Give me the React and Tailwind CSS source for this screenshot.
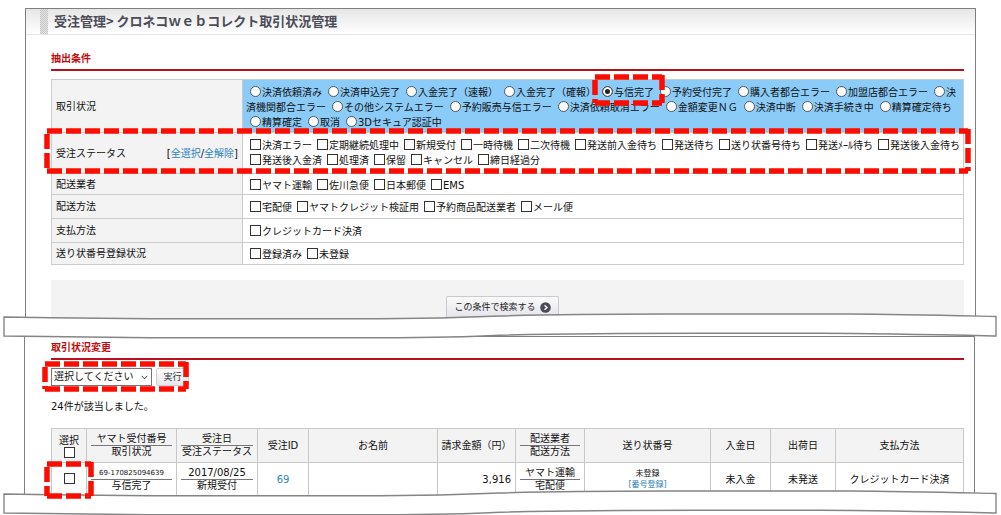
import React from "react";

const tradeStates = [
  "決済依頼済み", "決済申込完了", "入金完了（速報）", "入金完了（確報）", "与信完了",
  "予約受付完了", "購入者都合エラー", "加盟店都合エラー", "決済機関都合エラー",
  "その他システムエラー", "予約販売与信エラー", "決済依頼取消エラー", "金額変更ＮＧ",
  "決済中断", "決済手続き中", "精算確定待ち", "精算確定", "取消", "3Dセキュア認証中",
];

const orderStates = [
  "決済エラー", "定期継続処理中", "新規受付", "一時待機", "二次待機", "発送前入金待ち",
  "発送待ち", "送り状番号待ち", "発送ﾒｰﾙ待ち", "発送後入金待ち", "発送後入金済", "処理済",
  "保留", "キャンセル", "締日経過分",
];

const otherRows = [
  { title: "配送業者", height: "h-[21px]", items: ["ヤマト運輸", "佐川急便", "日本郵便", "EMS"] },
  { title: "配送方法", height: "h-6", items: ["宅配便", "ヤマトクレジット検証用", "予約商品配送業者", "メール便"] },
  { title: "支払方法", height: "h-6", items: ["クレジットカード決済"] },
  { title: "送り状番号登録状況", height: "h-[22px]", items: ["登録済み", "未登録"] },
];

const boxClass =
  "inline-block size-[11px] appearance-none border border-[#333] bg-white align-[-1px] checked:bg-[#333]";

function Marker({ className }) {
  return (
    <svg className={`pointer-events-none absolute z-20 overflow-visible ${className}`} aria-hidden="true">
      <g stroke="#fb0d00" strokeWidth="5.5" strokeDasharray="15 4">
        <line x1="0" y1="0" x2="100%" y2="0" />
        <line x1="0" y1="100%" x2="100%" y2="100%" />
        <line x1="0" y1="3" x2="0" y2="100%" />
        <line x1="100%" y1="-2" x2="100%" y2="100%" />
      </g>
    </svg>
  );
}

function Radio({ text }) {
  const on = text === "与信完了";
  return (
    <label className={on ? "relative mr-[2px]" : "mr-[2px]"}>
      <input
        type="radio"
        name="trade"
        defaultChecked={on}
        className="mr-px ml-1 inline-block size-[11px] appearance-none rounded-full border border-[#555] bg-white align-[-1px] checked:bg-[#222] checked:shadow-[inset_0_0_0_2px_white]"
      />
      {text}
      {on && <Marker className="-top-[10px] -left-[3px] h-[26px] w-[67px]" />}
    </label>
  );
}

function Check({ text }) {
  return (
    <label className="mr-px">
      <input type="checkbox" className={`mr-px ml-1 ${boxClass}`} />
      {text}
    </label>
  );
}

function Tear({ className }) {
  return (
    <svg
      className={`pointer-events-none relative z-10 block h-[26px] w-full ${className}`}
      viewBox="0 0 1001 26"
      preserveAspectRatio="none"
      aria-hidden="true"
    >
      <path
        d="M4 4 C60 5 110 5.7 200 5.8 H380 C440 5.4 470 4.2 500 3 C580 .8 640 1.2 700 1 H850 C900 1.3 950 2.5 996 3.5 V23 C940 21.8 880 20.5 820 20.3 H700 C640 20.3 560 20.8 500 22.2 C470 23.8 430 24.6 380 24.8 H150 C100 24.4 50 23.6 4 23 Z"
        fill="white"
        stroke="#858585"
        strokeWidth="1.4"
      />
    </svg>
  );
}

function Heading({ children }) {
  return (
    <h2 className="border-b-2 border-[#b5121b] pb-[2px] text-[10px] leading-4 font-bold text-[#c00d0d]">{children}</h2>
  );
}

function Stack({ top, bottom, small }) {
  return (
    <div className="mx-1 leading-[12px]">
      <div className={small ? "h-[13px] border-b border-[#777] text-[7px]" : "h-[13px] border-b border-[#777]"}>{top}</div>
      <div>{bottom}</div>
    </div>
  );
}

const th = "border border-[#c8c8c8] bg-[#f3f3f3] p-0 text-center font-normal";
const td = "border border-[#c8c8c8] bg-white p-0 text-center";
const rowHead = "w-[191px] border border-[#ccc] bg-[#f3f3f3] py-0 px-1 text-left font-normal";
const link = "text-[#2f83bd]";

export default function App() {
  return (
    <main className="bg-white pt-2 font-['DejaVu_Sans','Noto_Sans_CJK_JP',sans-serif] text-[10px] leading-[15px] text-[#111]" lang="ja">
      <section className="mr-[25px] ml-[25px] border border-b-0 border-[#7f7f7f]">
        <header className="flex h-[26px] items-stretch border-b border-[#e5e5e5] bg-linear-to-b from-[#e6e6e6] to-white pl-[14px]">
          <span className="w-2 bg-[repeating-conic-gradient(#c4c4c4_0_25%,#e6e6e6_0_50%)] bg-size-[2px_2px]" />
          <h1 className="pl-[6px] font-['Noto_Sans_CJK_JP',sans-serif] text-[13px] leading-6 font-bold text-[#4c4c57]">受注管理&gt; クロネコｗｅｂコレクト取引状況管理</h1>
        </header>
        <div className="pt-4 pr-[11px] pl-[25px]">
          <Heading>抽出条件</Heading>
          <table className="mt-2 w-full border-collapse">
            <tbody>
              <tr className="h-[53px]">
                <th scope="row" className={rowHead}>取引状況</th>
                <td className="border border-[#ccc] bg-[#8bcbf8] px-[3px] pt-1 pb-[2px]">
                  {tradeStates.map((t) => <Radio key={t} text={t} />)}
                </td>
              </tr>
              <tr className="relative h-[41px]">
                <th scope="row" className={rowHead}>
                  <div className="flex justify-between">
                    <span>受注ステータス</span>
                    <span>[<a href="#all" className={link}>全選択</a>/<a href="#none" className={link}>全解除</a>]</span>
                  </div>
                  <Marker className="-top-[2px] -left-[5px] h-10 w-[calc(100%+9px)]" />
                </th>
                <td className="border border-[#ccc] py-0 pr-0 pl-[3px]">
                  {orderStates.map((t) => <Check key={t} text={t} />)}
                </td>
              </tr>
              {otherRows.map((r) => (
                <tr key={r.title} className={r.height}>
                  <th scope="row" className={rowHead}>{r.title}</th>
                  <td className="border border-[#ccc] pt-[2px] pr-0 pb-0 pl-[3px]">
                    {r.items.map((t) => <Check key={t} text={t} />)}
                  </td>
                </tr>
              ))}
            </tbody>
          </table>
          <div className="mt-[15px] flex h-[38px] justify-center bg-[#f3f3f3] pt-4 pr-[10px]">
            <button type="button" className="flex h-[22px] items-center gap-1 rounded-t-xs border border-b-0 border-[#c9c9d0] bg-linear-to-b from-[#fafafa] to-[#e4e4ea] px-[7px] text-[9px] text-[#222]">
              この条件で検索する
              <svg className="size-[11px]" viewBox="0 0 11 11" aria-hidden="true">
                <circle cx="5.5" cy="5.5" r="5.3" fill="#4b4b57" />
                <path d="M4.5 3.2 7 5.5 4.5 7.8" fill="none" stroke="white" strokeWidth="1.4" />
              </svg>
            </button>
          </div>
        </div>
      </section>

      <Tear className="-mt-[5px] -mb-[3px]" />

      <section className="mr-[26px] ml-[24px] border border-b-0 border-[#7f7f7f] pt-[3px] pr-[10px] pl-[26px]">
        <Heading>取引状況変更</Heading>
        <form className="relative mt-2 flex h-[18px] w-[138px] gap-1" onSubmit={(e) => e.preventDefault()}>
          <div className="relative w-[101px]">
            <select aria-label="取引状況" className="h-full w-full appearance-none border border-[#777] bg-white pl-[2px] text-[10px] leading-4">
              <option>選択してください</option>
            </select>
            <svg className="pointer-events-none absolute top-[7px] right-1 h-[5px] w-[7px]" viewBox="0 0 7 5" aria-hidden="true">
              <path d="M.7 .8 3.5 3.8 6.3 .8" fill="none" stroke="#444" />
            </svg>
          </div>
          <button type="submit" className="flex-1 rounded-xs border border-[#d0d0d5] bg-linear-to-b from-white to-[#e6e6ec] text-[9px] leading-4 text-[#333]">実行</button>
          <Marker className="-top-1 -left-[6px] h-[25px] w-[141px]" />
        </form>
        <p className="mt-[13px]">24件が該当しました。</p>
        <table className="mt-[14px] w-full table-fixed border-collapse">
          <colgroup>
            <col className="w-[35px]" /><col className="w-[90px]" /><col className="w-[81px]" /><col className="w-[51px]" />
            <col /><col className="w-[78px]" /><col className="w-[69px]" /><col className="w-[126px]" />
            <col className="w-[60px]" /><col className="w-[65px]" /><col className="w-[128px]" />
          </colgroup>
          <thead>
            <tr className="h-[34px]">
              <th className={th}>
                <label className="flex flex-col items-center leading-[13px]">選択<input type="checkbox" className={boxClass} /></label>
              </th>
              <th className={th}><Stack top="ヤマト受付番号" bottom="取引状況" /></th>
              <th className={th}><Stack top="受注日" bottom="受注ステータス" /></th>
              <th className={th}>受注ID</th>
              <th className={th}>お名前</th>
              <th className={`${th} whitespace-nowrap`}>請求金額（円）</th>
              <th className={th}><Stack top="配送業者" bottom="配送方法" /></th>
              <th className={th}>送り状番号</th>
              <th className={th}>入金日</th>
              <th className={th}>出荷日</th>
              <th className={th}>支払方法</th>
            </tr>
          </thead>
          <tbody>
            <tr className="h-[33px]">
              <td className={`${td} relative`}>
                <input type="checkbox" aria-label="69を選択" className={boxClass} />
                <Marker className="top-px -left-[5px] h-8 w-11" />
              </td>
              <td className={td}><Stack top="69-170825094639" bottom="与信完了" small /></td>
              <td className={td}><Stack top="2017/08/25" bottom="新規受付" /></td>
              <td className={td}><a href="#69" className={link}>69</a></td>
              <td className={td} />
              <td className="border border-[#c8c8c8] bg-white p-0 pr-1 text-right">3,916</td>
              <td className={td}><Stack top="ヤマト運輸" bottom="宅配便" /></td>
              <td className={td}>
                <div className="text-[8px] leading-[11px]">未登録<br /><a href="#number" className={link}>[番号登録]</a></div>
              </td>
              <td className={td}>未入金</td>
              <td className={td}>未発送</td>
              <td className={td}>クレジットカード決済</td>
            </tr>
          </tbody>
        </table>
      </section>

      <Tear className="-mt-[6px]" />
    </main>
  );
}
